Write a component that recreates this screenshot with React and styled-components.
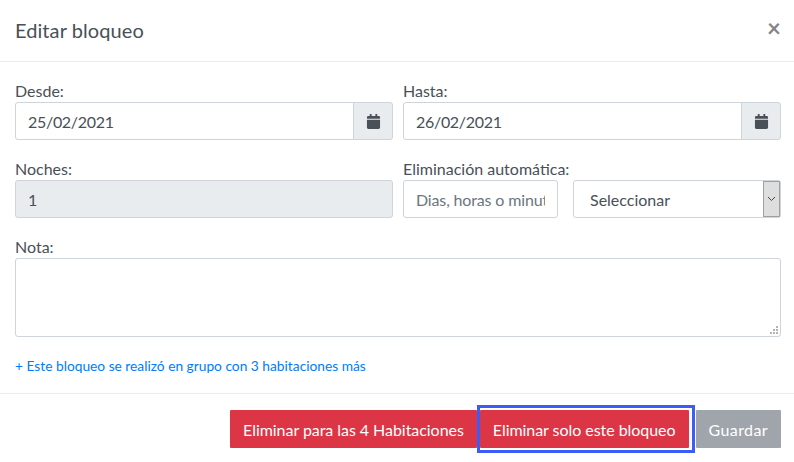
import React from 'react'
import styled, { createGlobalStyle } from 'styled-components'
import { FaCalendar } from 'react-icons/fa'

const Global = createGlobalStyle`
  * { box-sizing: border-box; }
  html, body { margin: 0; padding: 0; background: #fff; }
  body { font-family: Lato, "Liberation Sans", sans-serif; font-size: 16px; color: #495057; }
`

const Modal = styled.div`
  width: 794px;
  height: 462px;
  background: #fff;
  display: flex;
  flex-direction: column;
`
const Header = styled.div`
  height: 62px;
  padding: 0 15px 2px;
  display: flex;
  align-items: center;
  justify-content: space-between;
  border-bottom: 1px solid #e9ecef;
`
const Title = styled.h5`
  margin: 0;
  font-size: 20px;
  font-weight: 400;
  letter-spacing: 0.08px;
  color: #495057;
`
const Close = styled.button`
  border: 0;
  padding: 0;
  margin: -3px -2px 0 0;
  background: none;
  color: #858585;
  font: 700 24px/1 Lato, sans-serif;
`
const Body = styled.div`
  padding: 18px 13px 0 15px;
  height: 331px;
  display: flex;
  flex-direction: column;
`
const Row = styled.div`
  display: grid;
  grid-template-columns: 378px 378px;
  column-gap: 10px;
  margin-bottom: 18px;
`
const Field = styled.div`
  display: flex;
  flex-direction: column;
`
const Label = styled.label`
  font-size: 16px;
  line-height: 22px;
  color: #495057;
`
const InputGroup = styled.div`
  display: flex;
  height: 38px;
`
const Input = styled.input`
  flex: ${p => (p.$auto ? '0 0 155px' : '1')};
  width: ${p => (p.$auto ? '155px' : '100%')};
  min-width: 0;
  height: 38px;
  padding: 1px 12px 0;
  border: 1px solid #ced4da;
  border-radius: ${p => (p.$joined ? '3px 0 0 3px' : '3px')};
  background: ${p => (p.disabled ? '#e9ecef' : '#fff')};
  color: #495057;
  font: 400 16px Lato, sans-serif;
  letter-spacing: ${p => (p.$joined ? '-0.3px' : '-0.15px')};
  opacity: 1;
  &::placeholder { color: #6c757d; opacity: 1; }
`
const Addon = styled.div`
  width: 40px;
  margin-left: -1px;
  display: flex;
  align-items: center;
  justify-content: center;
  border: 1px solid #ced4da;
  border-radius: 0 3px 3px 0;
  background: #e9ecef;
  color: #495057;
  font-size: 15px;
`
const AutoRow = styled.div`
  display: flex;
  gap: 15px;
`
const SelectBox = styled.div`
  position: relative;
  flex: 1;
  height: 38px;
`
const Select = styled.select`
  appearance: none;
  width: 100%;
  height: 38px;
  padding: 1px 16px 0;
  border: 1px solid #ced4da;
  border-radius: 3px;
  background: #fff;
  color: #495057;
  font: 400 16px Lato, sans-serif;
`
const Arrow = styled.span`
  position: absolute;
  top: 1px;
  right: 1px;
  width: 17px;
  height: 36px;
  display: flex;
  align-items: center;
  justify-content: center;
  background: #dedede;
  border: 1px solid #a0a0a0;
  color: #444;
  pointer-events: none;
`
const NoteBox = styled.div`
  position: relative;
  width: 766px;
  height: 79px;
`
const Note = styled.textarea`
  display: block;
  width: 100%;
  height: 100%;
  resize: none;
  border: 1px solid #ced4da;
  border-radius: 3px;
  font: 400 16px Lato, sans-serif;
  color: #495057;
  padding: 6px 12px;
`
const Grip = styled.svg`
  position: absolute;
  right: 3px;
  bottom: 3px;
  fill: #b4b4b4;
`
const GroupLink = styled.a`
  margin-top: 21px;
  font-size: 13.76px;
  line-height: 16px;
  color: #007bff;
  text-decoration: none;
`
const Footer = styled.div`
  flex: 1;
  border-top: 1px solid #e9ecef;
  padding: 16px 13px 0 0;
  display: flex;
  justify-content: flex-end;
  align-items: flex-start;
`
const Button = styled.button`
  position: relative;
  height: 38px;
  padding: 0 13px;
  border: 0;
  border-radius: 1px;
  background: ${p => (p.$muted ? '#a0a5ab' : '#dc3545')};
  color: #fff;
  font: 400 16px Lato, sans-serif;
  letter-spacing: ${p => (p.$muted ? '0.4px' : '-0.05px')};
  margin-left: ${p => p.$ml || '0'};
`
const FocusRing = styled.span`
  position: absolute;
  top: -5px;
  bottom: -5px;
  left: -3px;
  right: -6px;
  border: 3px solid #3f5bf6;
  pointer-events: none;
`

export default function App() {
  return (
    <>
      <Global />
      <Modal>
        <Header>
          <Title>Editar bloqueo</Title>
          <Close>×</Close>
        </Header>
        <Body>
          <Row>
            <Field>
              <Label>Desde:</Label>
              <InputGroup>
                <Input $joined defaultValue="25/02/2021" />
                <Addon><FaCalendar /></Addon>
              </InputGroup>
            </Field>
            <Field>
              <Label>Hasta:</Label>
              <InputGroup>
                <Input $joined defaultValue="26/02/2021" />
                <Addon><FaCalendar /></Addon>
              </InputGroup>
            </Field>
          </Row>
          <Row>
            <Field>
              <Label>Noches:</Label>
              <Input disabled defaultValue="1" />
            </Field>
            <Field>
              <Label>Eliminación automática:</Label>
              <AutoRow>
                <Input $auto placeholder="Dias, horas o minutos" />
                <SelectBox>
                  <Select defaultValue="">
                    <option value="">Seleccionar</option>
                  </Select>
                  <Arrow>
                    <svg width="9" height="6" viewBox="0 0 9 6" fill="none" stroke="currentColor" strokeWidth="1">
                      <path d="M1 1l3.5 3.5L8 1" />
                    </svg>
                  </Arrow>
                </SelectBox>
              </AutoRow>
            </Field>
          </Row>
          <Field>
            <Label>Nota:</Label>
            <NoteBox>
              <Note />
              <Grip width="8" height="8" viewBox="0 0 8 8">
                <rect x="6" y="0" width="2" height="2" />
                <rect x="3" y="3" width="2" height="2" />
                <rect x="6" y="3" width="2" height="2" />
                <rect x="0" y="6" width="2" height="2" />
                <rect x="3" y="6" width="2" height="2" />
                <rect x="6" y="6" width="2" height="2" />
              </Grip>
            </NoteBox>
          </Field>
          <GroupLink href="#">+ Este bloqueo se realizó en grupo con 3 habitaciones más</GroupLink>
        </Body>
        <Footer>
          <Button>Eliminar para las 4 Habitaciones</Button>
          <Button $ml="3px">Eliminar solo este bloqueo<FocusRing /></Button>
          <Button $muted $ml="7px">Guardar</Button>
        </Footer>
      </Modal>
    </>
  )
}
